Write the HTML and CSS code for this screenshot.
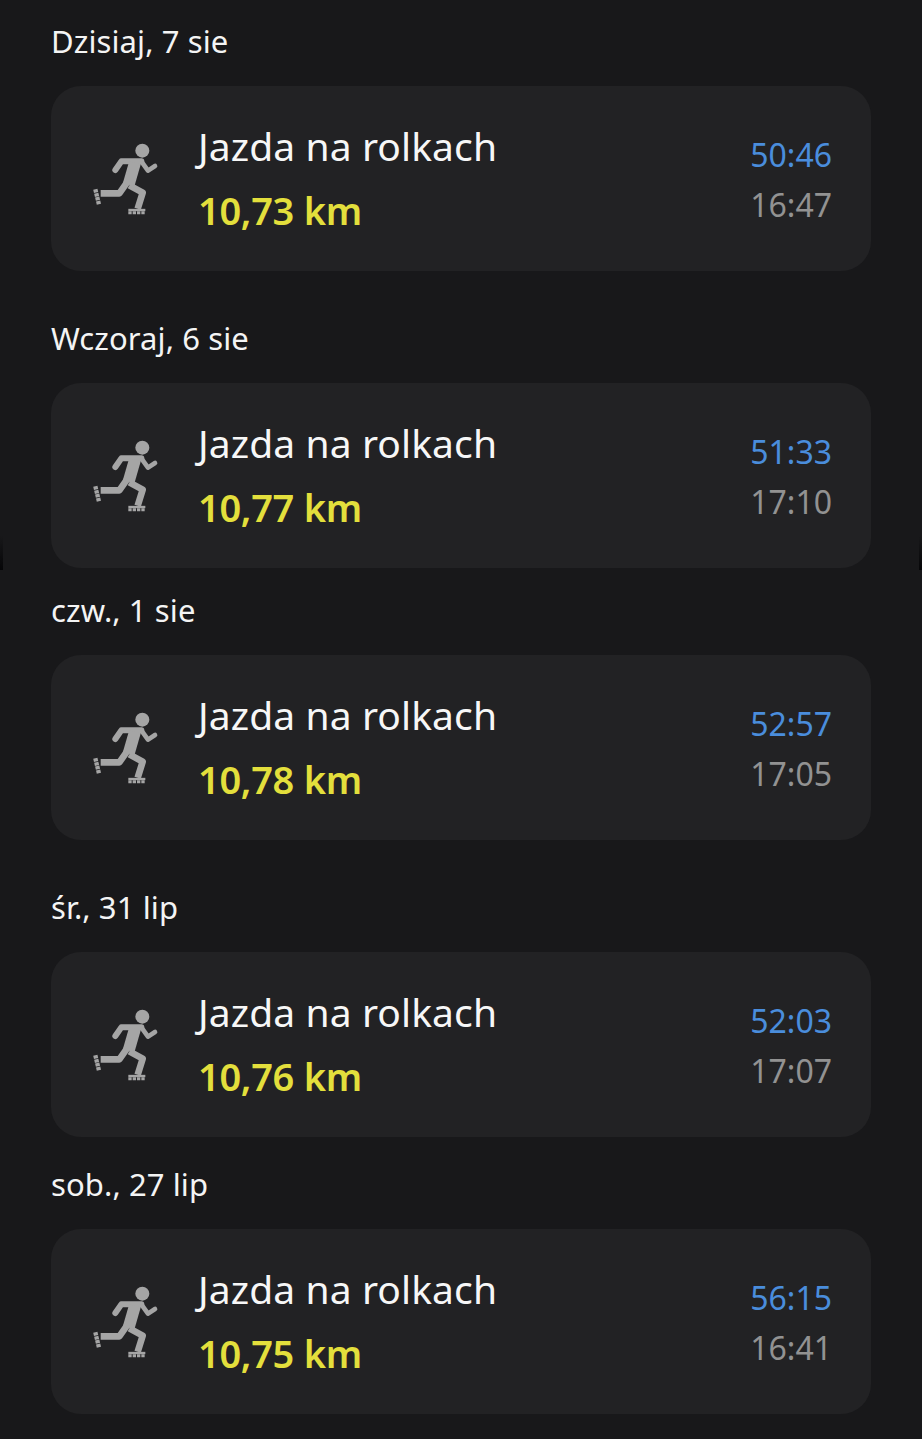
FILE: index.html
```html
<!DOCTYPE html>
<html lang="pl">
<head>
    <meta charset="UTF-8">
    <meta name="viewport" content="width=device-width, initial-scale=1.0">
    <title>Historia treningów</title>
    <link rel="stylesheet" href="styles.css">
</head>
<body>
    <svg class="defs" width="0" height="0" aria-hidden="true">
        <symbol id="rolki" viewBox="0 0 270 270">
            <circle cx="187" cy="62" r="21" fill="currentColor"/>
            <g fill="none" stroke="currentColor" stroke-linejoin="round">
                <path d="M106 120 L124 94 L184 94" stroke-width="18" stroke-linecap="round"/>
                <path d="M184 94 L204 122 L225 108" stroke-width="14" stroke-linecap="round"/>
                <path d="M62 190 L118 190 L145 152" stroke-width="20"/>
                <path d="M148 166 L188 188 L173 236" stroke-width="20"/>
                <path d="M165 98 L146 164" stroke-width="36"/>
            </g>
            <g fill="none" stroke="currentColor">
                <path d="M46 178 L57 224" stroke-width="13" stroke-dasharray="10 2"/>
                <path d="M145 240 L196 240" stroke-width="7"/>
                <path d="M145 248 L196 248" stroke-width="9" stroke-dasharray="10 3"/>
            </g>
        </symbol>
    </svg>

    <main class="lista">
        <section class="dzien pierwszy">
            <h2 class="data">Dzisiaj, 7 sie</h2>
            <div class="karta">
                <svg class="ikona"><use href="#rolki"/></svg>
                <div class="opis">
                    <p class="nazwa">Jazda na rolkach</p>
                    <p class="dystans">10,73 km</p>
                </div>
                <div class="czasy">
                    <p class="czas">50:46</p>
                    <p class="godzina">16:47</p>
                </div>
            </div>
        </section>

        <section class="dzien">
            <h2 class="data">Wczoraj, 6 sie</h2>
            <div class="karta">
                <svg class="ikona"><use href="#rolki"/></svg>
                <div class="opis">
                    <p class="nazwa">Jazda na rolkach</p>
                    <p class="dystans">10,77 km</p>
                </div>
                <div class="czasy">
                    <p class="czas">51:33</p>
                    <p class="godzina">17:10</p>
                </div>
            </div>
        </section>

        <section class="dzien ciasny">
            <h2 class="data">czw., 1 sie</h2>
            <div class="karta">
                <svg class="ikona"><use href="#rolki"/></svg>
                <div class="opis">
                    <p class="nazwa">Jazda na rolkach</p>
                    <p class="dystans">10,78 km</p>
                </div>
                <div class="czasy">
                    <p class="czas">52:57</p>
                    <p class="godzina">17:05</p>
                </div>
            </div>
        </section>

        <section class="dzien">
            <h2 class="data">śr., 31 lip</h2>
            <div class="karta">
                <svg class="ikona"><use href="#rolki"/></svg>
                <div class="opis">
                    <p class="nazwa">Jazda na rolkach</p>
                    <p class="dystans">10,76 km</p>
                </div>
                <div class="czasy">
                    <p class="czas">52:03</p>
                    <p class="godzina">17:07</p>
                </div>
            </div>
        </section>

        <section class="dzien sredni">
            <h2 class="data">sob., 27 lip</h2>
            <div class="karta">
                <svg class="ikona"><use href="#rolki"/></svg>
                <div class="opis">
                    <p class="nazwa">Jazda na rolkach</p>
                    <p class="dystans">10,75 km</p>
                </div>
                <div class="czasy">
                    <p class="czas">56:15</p>
                    <p class="godzina">16:41</p>
                </div>
            </div>
        </section>
    </main>
</body>
</html>
```

FILE: styles.css
```css
* {
    box-sizing: border-box;
}

body {
    position: relative;
    margin: 0;
    height: 1439px;
    overflow: hidden;
    background-color: #18181a;
    font-family: "Noto Sans", "Open Sans", sans-serif;
}

/* ciemne rogi na laczeniu dwoch zrzutow */
body::before,
body::after {
    content: "";
    position: absolute;
    top: 535px;
    width: 3px;
    height: 35px;
    background: linear-gradient(#18181a, #060608);
}

body::before {
    left: 0;
}

body::after {
    right: 0;
}

p {
    margin: 0;
}

.defs {
    display: block;
}

.lista {
    padding: 0 51px;
}

.dzien {
    margin-top: 25px;
}

.dzien.pierwszy {
    margin-top: 0;
}

.dzien.ciasny {
    margin-top: 0;
}

.dzien.sredni {
    margin-top: 5px;
}

.data {
    display: flex;
    align-items: center;
    height: 87px;
    margin: 0;
    padding-bottom: 4px;
    font-size: 31px;
    font-weight: 400;
    line-height: 40px;
    letter-spacing: 0.1px;
    color: #f4f4f4;
}

.pierwszy .data {
    height: 86px;
}

.karta {
    display: flex;
    align-items: center;
    height: 185px;
    padding: 0 39px 0 29px;
    background-color: #222224;
    border-radius: 30px;
}

.ikona {
    flex: none;
    width: 90px;
    height: 90px;
    margin-bottom: 7px;
    color: #a5a5a5;
}

.opis {
    flex: 1;
    margin-left: 28px;
}

.nazwa {
    margin-top: -1px;
    font-size: 39px;
    line-height: 50px;
    letter-spacing: 0.1px;
    color: #f7f7f7;
}

.dystans {
    margin: 14px 0 0;
    font-size: 38px;
    font-weight: 600;
    line-height: 50px;
    letter-spacing: -0.3px;
    color: #e3df3c;
}

.czasy {
    padding-top: 3px;
    text-align: right;
}

.czas {
    font-size: 32px;
    line-height: 42px;
    color: #4a8ddc;
}

.godzina {
    margin-top: 8px;
    font-size: 32px;
    line-height: 42px;
    color: #929292;
}
```
